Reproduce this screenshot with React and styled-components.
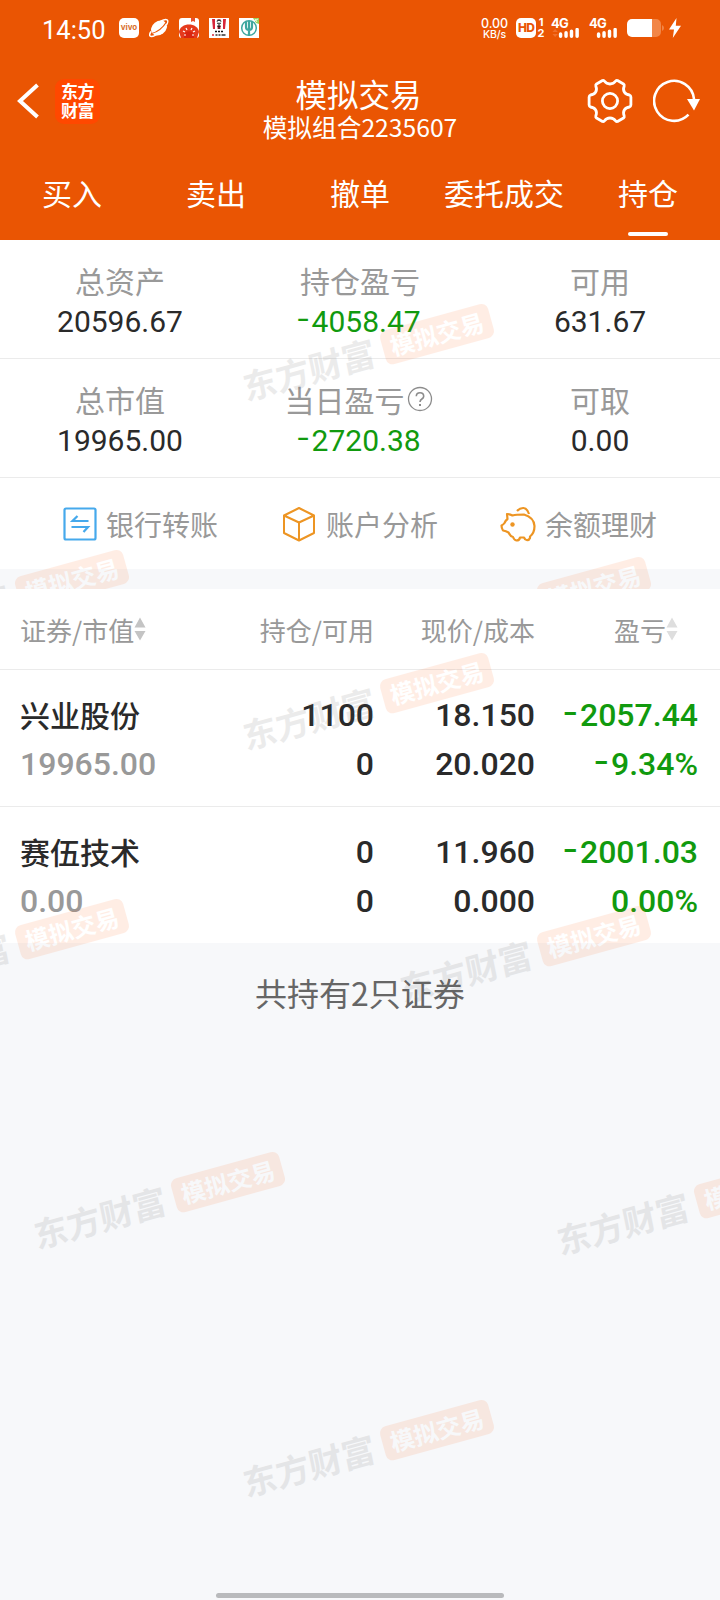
import React from "react";
import styled, { createGlobalStyle } from "styled-components";

const CJK = `"Noto Sans CJK SC", sans-serif`;

const stats = [
  [
    { label: "总资产", value: "20596.67" },
    { label: "持仓盈亏", value: "-4058.47", green: true },
    { label: "可用", value: "631.67" },
  ],
  [
    { label: "总市值", value: "19965.00" },
    { label: "当日盈亏", value: "-2720.38", green: true, help: true },
    { label: "可取", value: "0.00" },
  ],
];

const holdings = [
  {
    name: "兴业股份",
    market: "19965.00",
    amount: ["1100", "0"],
    price: ["18.150", "20.020"],
    profit: ["-2057.44", "-9.34%"],
  },
  {
    name: "赛伍技术",
    market: "0.00",
    amount: ["0", "0"],
    price: ["11.960", "0.000"],
    profit: ["-2001.03", "0.00%"],
  },
];

const summaryMarks = [
  [367, 113],
  [2, 359],
  [524, 366],
];

const holdingMarks = [
  [367, 113],
  [2, 359],
  [524, 366],
  [158, 612],
  [681, 618],
  [367, 860],
];

const App = () => (
  <>
    <GlobalStyle />
    <Screen>
      <Header>
        <StatusBar />
        <TitleBar />
        <Tabs>
          {["买入", "卖出", "撤单", "委托成交", "持仓"].map((tab) => (
            <Tab key={tab} $active={tab === "持仓"}>
              {tab}
            </Tab>
          ))}
        </Tabs>
      </Header>
      <Summary>
        {stats.map((row, i) => (
          <StatRow key={i}>
            {row.map((s) => (
              <Stat key={s.label}>
                <StatLabel $help={s.help}>
                  {s.label}
                  {s.help && <HelpIcon />}
                </StatLabel>
                <StatValue $green={s.green}>
                  <Signed value={s.value} />
                </StatValue>
              </Stat>
            ))}
          </StatRow>
        ))}
        <Actions>
          <Action>
            <TransferIcon />
            银行转账
          </Action>
          <Action>
            <CubeIcon />
            账户分析
          </Action>
          <Action>
            <PiggyIcon />
            余额理财
          </Action>
        </Actions>
        <Gap />
        <Watermarks marks={summaryMarks} />
      </Summary>
      <Holdings>
        <TableHead>
          <HeadCell $left>
            证券/市值
            <SortIcon color="#c4c4c4" />
          </HeadCell>
          <HeadCell>持仓/可用</HeadCell>
          <HeadCell>现价/成本</HeadCell>
          <HeadCell $sort>
            盈亏
            <SortIcon color="#dedede" />
          </HeadCell>
        </TableHead>
        {holdings.map((h) => (
          <Row key={h.name}>
            <Name>{h.name}</Name>
            <Num>{h.amount[0]}</Num>
            <Num>{h.price[0]}</Num>
            <Num $green>
              <Signed value={h.profit[0]} />
            </Num>
            <Num $muted>{h.market}</Num>
            <Num>{h.amount[1]}</Num>
            <Num>{h.price[1]}</Num>
            <Num $green>
              <Signed value={h.profit[1]} />
            </Num>
          </Row>
        ))}
        <Footer>共持有2只证券</Footer>
        <Watermarks marks={holdingMarks} />
        <HomeBar />
      </Holdings>
    </Screen>
  </>
);

// the minus sign is drawn a little wider and higher than the font's hyphen
const Signed = ({ value }) =>
  value.startsWith("-") ? (
    <>
      <Minus>-</Minus>
      {value.slice(1)}
    </>
  ) : (
    value
  );

const Watermarks = ({ marks }) =>
  marks.map(([x, y]) => (
    <Watermark key={`${x}-${y}`} style={{ left: x, top: y }}>
      <MarkName>东方财富</MarkName>
      <MarkBadge>模拟交易</MarkBadge>
    </Watermark>
  ));

const StatusBar = () => (
  <Status>
    <Clock>14:50</Clock>
    <AppIcons>
      <VivoIcon>vivo</VivoIcon>
      <svg width="20" height="20" viewBox="0 0 20 20">
        <ellipse cx="10" cy="10" rx="8.6" ry="6.8" transform="rotate(-38 10 10)" fill="#fff" />
        <path d="M2 13.500C-1.500 19 2 20 9 15.800M11.500 3.200C18 0 20.500 1.500 17.500 7" stroke="#fff" strokeWidth="1.5" fill="none" />
        <path d="M2.500 15.500Q11.500 13.500 17.800 3.500" stroke="#ea5503" strokeWidth="1.2" fill="none" />
      </svg>
      <svg width="20" height="20" viewBox="0 0 20 20">
        <rect width="20" height="20" rx="3" fill="#fff" />
        <path d="M12 0h4v4l-2-1-2 1z" fill="#e9502a" />
        <path d="M0 14C1 4 19 4 20 14l-2 6H2z" fill="#e53a1c" />
        <path d="M5 17C6 12 14 12 15 17v3H5z" fill="#d9250f" />
        <path d="M4 13l2 1M7 10l1 2M13 10l-1 2M16 13l-2 1M5 17h2M13 17h2" stroke="#fff" strokeWidth="1.2" />
      </svg>
      <svg width="20" height="20" viewBox="0 0 20 20">
        <rect width="20" height="20" fill="#fff" />
        <path d="M3 1h14l-1 10H4z" fill="#d7263a" />
        <path d="M6 1h2.5v10H6zM11.5 1H14v10h-2.5z" fill="#fff" />
        <circle cx="10" cy="4.6" r="3.2" fill="#fff" />
        <path d="M7.8 3.5Q10 .8 12.2 3.5M8 5.3h4M10 6v5M8.5 8l1.500 1 1.500-1" stroke="#222" strokeWidth="1.1" fill="none" />
        <path d="M6 13.5h2M9 13.5h2M12 13.5h2" stroke="#111" strokeWidth="1.6" />
        <path d="M6.5 17h2M9.5 17h2M12.5 17h4" stroke="#333" strokeWidth="1.3" />
        <path d="M3 17h2" stroke="#d7263a" strokeWidth="1.5" />
      </svg>
      <svg width="20" height="20" viewBox="0 0 20 20">
        <rect width="20" height="20" fill="#fff" />
        <circle cx="10" cy="10" r="7.3" fill="none" stroke="#3fa79f" strokeWidth="1.5" />
        <path d="M7 4v5q0 3 3 3t3-3V4M10 3v15" fill="none" stroke="#3fa79f" strokeWidth="2.2" />
        <path d="M14 0h6v6l-3-1z" fill="#9ad05c" />
        <path d="M15 3l4-2M16 1l2 3" stroke="#fff" strokeWidth=".8" />
      </svg>
    </AppIcons>
    <NetSpeed>
      <span>0.00</span>
      <small>KB/s</small>
    </NetSpeed>
    <HdBox>HD</HdBox>
    <SimNo>
      <span>1</span>
      <span>2</span>
    </SimNo>
    <Signal>
      <span>4G</span>
      <SignalBars arrows />
    </Signal>
    <Signal>
      <span>4G</span>
      <SignalBars />
    </Signal>
    <Battery width="37" height="18" viewBox="0 0 37 18">
      <path d="M25 0h4a5 5 0 0 1 5 5v8a5 5 0 0 1-5 5h-4zM35 6q2 1 2 3t-2 3z" fill="#f28647" />
      <path d="M5 0h20v18H5a5 5 0 0 1-5-5V5a5 5 0 0 1 5-5z" fill="#fff" />
    </Battery>
    <svg width="12" height="20" viewBox="0 0 12 20">
      <path d="M7.5 0L0 11.5h5L3.8 20 12 7.7H6.8z" fill="#fff" />
    </svg>
  </Status>
);

const SignalBars = ({ arrows }) => (
  <svg width="31" height="11" viewBox="0 0 31 11">
    {arrows && <path d="M0 4.5L3 1l3 3.500zM0 6.500h6L3 10z" fill="#f0702c" />}
    <path
      d="M9 6.700v2.300M15 5.200v3.800M21 3.600v5.400M27.200 1.700v7.300"
      stroke="#fff"
      strokeWidth="3.8"
      strokeLinecap="round"
    />
  </svg>
);

const TitleBar = () => (
  <TitleRow>
    <TitleSide>
      <svg width="22" height="36" viewBox="0 0 22 36">
        <path d="M20.5 2L3 18l17.500 16" fill="none" stroke="#fff" strokeWidth="4" />
      </svg>
      <Logo>
        东方
        <br />
        财富
      </Logo>
    </TitleSide>
    <TitleText>
      <h1>模拟交易</h1>
      <p>模拟组合2235607</p>
    </TitleText>
    <TitleSide $right>
      <svg width="46" height="46" viewBox="-23 -23 46 46" fill="none" stroke="#fff" strokeWidth="2.8">
        <path
          strokeLinejoin="round"
          d="M-7.500-20.500Q-6.500-20.800-5.700-20Q-3.500-17 0-17T5.700-20Q6.500-20.800 7.500-20.500L13.500-17Q14.500-16.300 14.200-15Q12.800-11.500 14.300-9T19.500-6Q20.800-5.500 20.900-4V4Q20.800 5.500 19.500 6Q15.800 6.500 14.300 9T14.200 15Q14.500 16.300 13.500 17L7.500 20.500Q6.500 20.800 5.700 20Q3.500 17 0 17T-5.700 20Q-6.500 20.800-7.500 20.500L-13.500 17Q-14.500 16.300-14.200 15Q-12.800 11.500-14.300 9T-19.500 6Q-20.800 5.500-20.900 4V-4Q-20.800-5.500-19.500-6Q-15.800-6.500-14.300-9T-14.200-15Q-14.500-16.300-13.500-17Z"
        />
        <circle r="7.6" />
      </svg>
      <svg width="48" height="46" viewBox="-21 -23 48 46">
        <path d="M20-2A20 20 0 1 0 14.500 13.700" fill="none" stroke="#fff" strokeWidth="2.6" />
        <path d="M13-2H26L20 9.500Z" fill="#fff" />
      </svg>
    </TitleSide>
  </TitleRow>
);

const HelpIcon = () => (
  <svg width="26" height="26" viewBox="0 0 26 26" fill="none" stroke="#8c8c8c">
    <circle cx="13" cy="13" r="11.5" strokeWidth="1.3" />
    <path d="M9.300 10.300Q9.300 6.700 13 6.700T16.700 10.200Q16.700 11.800 14.900 13T13 16" strokeWidth="1.6" />
    <path d="M13 18v2" strokeWidth="2" />
  </svg>
);

const TransferIcon = () => (
  <svg width="34" height="34" viewBox="0 0 34 34" fill="none" stroke="#46a9ec" strokeWidth="2.2">
    <rect x="1.500" y="1.500" width="31" height="31" rx="1.5" />
    <path d="M25.500 14H9.500L14.500 9M8.500 20H25L20.500 25" />
  </svg>
);

const CubeIcon = () => (
  <svg width="36" height="36" viewBox="-1 0 36 36" fill="none" stroke="#ed9523" strokeWidth="2" strokeLinejoin="round">
    <path d="M17 2L32 9.500V27L17 34.500L2 27V9.500ZM2 9.500L17 16.500L32 9.500M17 16.500V34.500" />
  </svg>
);

const PiggyIcon = () => (
  <svg width="36" height="36" viewBox="0 0 36 36" fill="none" stroke="#ed9523" strokeWidth="2.2" strokeLinejoin="round">
    <path d="M7 8Q10 8 12.500 9.500Q16 8.500 24 8.500Q34 11.500 34.500 20Q34.500 27 30 30.500V32Q29 34.500 26.500 34Q25 34 24 31.500H20Q19.500 34.500 16.500 34.500Q14 34 13 31Q10.500 30.500 8.500 26.500Q6 25 3 24.500Q1.500 22 1.500 19.500Q3.500 18.500 4.500 17Q5.500 14.500 7.500 13Z" />
    <path d="M17 5Q20 1.800 23.500 2T29 8" />
    <circle cx="12.500" cy="18.500" r="2.200" fill="#ed9523" stroke="none" />
  </svg>
);

const SortIcon = ({ color }) => (
  <svg width="12" height="24" viewBox="0 0 12 24">
    <path d="M6 .5L11.500 10.500H.5ZM.5 14H11.500L6 23.500Z" fill={color} />
  </svg>
);

const GlobalStyle = createGlobalStyle`
  * {
    box-sizing: border-box;
  }

  body {
    margin: 0;
    font-family: ${CJK};
  }
`;

const Screen = styled.div`
  display: flex;
  flex-direction: column;
  width: 720px;
  height: 1600px;
  overflow: hidden;
  background-color: #f7f8fa;
`;

const Header = styled.header`
  display: flex;
  flex-direction: column;
  height: 240px;
  color: #fff;
  background-color: #ea5503;
`;

const Status = styled.div`
  display: flex;
  align-items: center;
  height: 56px;
  padding: 0 39px 0 42px;
  font-family: Inter, sans-serif;
`;

const Clock = styled.span`
  width: 77px;
  padding-top: 3px;
  font-family: Roboto, sans-serif;
  font-size: 25.5px;
`;

const AppIcons = styled.div`
  display: flex;
  gap: 10px;
  margin-right: auto;
`;

const VivoIcon = styled.div`
  width: 20px;
  height: 20px;
  border-radius: 5px;
  font-size: 8px;
  font-weight: 700;
  line-height: 19px;
  text-align: center;
  color: #d9712f;
  background-color: #fff;
`;

const NetSpeed = styled.div`
  display: flex;
  flex-direction: column;
  align-items: center;
  margin-right: 8px;
  font-size: 12.5px;
  font-weight: 500;
  line-height: 12px;
  letter-spacing: -0.1px;

  small {
    font-size: 10.5px;
    line-height: 9px;
  }
`;

const HdBox = styled.div`
  width: 20px;
  height: 20px;
  border-radius: 5px;
  font-size: 12px;
  font-weight: 800;
  line-height: 20px;
  letter-spacing: -0.8px;
  text-align: center;
  color: #ea5503;
  background-color: #fff;
`;

const SimNo = styled.div`
  display: flex;
  flex-direction: column;
  width: 8px;
  margin: 0 6px 0 1px;
  font-size: 11px;
  font-weight: 700;
  line-height: 11px;
  text-align: center;
`;

const Signal = styled.div`
  display: flex;
  flex-direction: column;
  width: 31px;
  height: 20px;
  margin-right: 7px;
  font-size: 13px;
  font-weight: 700;
  line-height: 11px;
  letter-spacing: -0.8px;

  svg {
    margin-top: -1px;
  }
`;

const Battery = styled.svg`
  margin-right: 5px;
`;

const TitleRow = styled.div`
  display: grid;
  grid-template-columns: 180px 1fr 180px;
  align-items: center;
  height: 90px;
`;

const TitleSide = styled.div`
  display: flex;
  align-items: center;
  justify-content: ${(props) => (props.$right ? "flex-end" : "flex-start")};
  gap: ${(props) => (props.$right ? "20px" : "16px")};
  padding: ${(props) => (props.$right ? "0 19px 0 0" : "0 0 0 17px")};
`;

const Logo = styled.div`
  width: 45px;
  height: 45px;
  border-radius: 9px;
  font-size: 17px;
  font-weight: 700;
  line-height: 19px;
  letter-spacing: -0.5px;
  text-align: center;
  padding-top: 2px;
  background-color: #ff4800;
`;

const TitleText = styled.div`
  padding-top: 13px;
  text-align: center;

  h1 {
    margin: 0;
    padding-right: 3px;
    font-size: 31.5px;
    font-weight: 400;
    line-height: 38px;
  }

  p {
    margin: 0;
    font-size: 24.7px;
    line-height: 29px;
  }
`;

const Tabs = styled.nav`
  display: grid;
  grid-template-columns: repeat(5, 1fr);
  flex: 1;
`;

const Tab = styled.div`
  display: flex;
  flex-direction: column;
  align-items: center;
  padding-top: 26px;
  font-size: 30px;
  line-height: 40px;

  &::after {
    content: "";
    width: 40px;
    height: 4px;
    margin-top: 20px;
    border-radius: 2px;
    background-color: ${(props) => (props.$active ? "#fff" : "transparent")};
  }
`;

const Summary = styled.section`
  position: relative;
  height: 349px;
  overflow: hidden;
  background-color: #fff;
`;

const StatRow = styled.div`
  display: grid;
  grid-template-columns: repeat(3, 1fr);
  height: 119px;
  padding-top: 20px;
  border-bottom: 1px solid #ebebeb;
`;

const Stat = styled.div`
  text-align: center;
`;

const StatLabel = styled.div`
  display: flex;
  align-items: center;
  justify-content: center;
  gap: 2px;
  height: 40px;
  padding-right: ${(props) => (props.$help ? "3px" : 0)};
  font-size: 30px;
  line-height: 40px;
  color: #999;
`;

const StatValue = styled.div`
  padding-top: 2px;
  font-family: Roboto, sans-serif;
  font-size: 30px;
  line-height: 40px;
  color: ${(props) => (props.$green ? "#119a0e" : "#2a2a2a")};
`;

const Minus = styled.span`
  display: inline-block;
  margin-right: 4px;
  transform: translateY(-3px) scaleX(1.35);
`;

const Actions = styled.div`
  display: grid;
  grid-template-columns: repeat(3, 1fr);
  height: 91px;
  padding: 0 32px 0 31px;
`;

const Action = styled.div`
  display: flex;
  align-items: center;
  justify-content: center;
  gap: 9px;
  font-size: 28px;
  color: #999;
`;

const Gap = styled.div`
  height: 20px;
  background-color: #f7f8fa;
`;

const Holdings = styled.section`
  position: relative;
  display: flex;
  flex-direction: column;
  flex: 1;
  overflow: hidden;
`;

const TableHead = styled.div`
  display: grid;
  grid-template-columns: 180px 174px 161px 163px;
  height: 81px;
  padding: 0 22px 0 20px;
  align-items: center;
  border-bottom: 1px solid #ebebeb;
  background-color: #fff;
`;

const HeadCell = styled.div`
  display: flex;
  align-items: center;
  justify-content: ${(props) => (props.$left ? "flex-start" : "flex-end")};
  padding-right: ${(props) => (props.$sort ? "20px" : 0)};
  font-size: 26px;
  color: #999;
`;

const Row = styled.div`
  display: grid;
  grid-template-columns: 180px 174px 161px 163px;
  grid-template-rows: 49px 49px;
  height: 137px;
  padding: 20px 22px 0 20px;
  border-bottom: 1px solid #ebebeb;
  line-height: 49px;
  color: #2a2a2a;
  background-color: #fff;

  &:nth-of-type(3) {
    height: 136px;
    border-bottom: none;
  }
`;

const Name = styled.div`
  font-size: 30px;
  font-weight: 500;
  line-height: 48px;
`;

const numColor = ({ $green, $muted }) => {
  if ($green) return "#119a0e";
  return $muted ? "#999" : "#2a2a2a";
};

const Num = styled.div`
  padding-top: 1px;
  font-family: Roboto, sans-serif;
  font-size: 32px;
  font-weight: 500;
  text-align: ${(props) => (props.$muted ? "left" : "right")};
  color: ${numColor};
`;

const Footer = styled.div`
  padding-top: 27px;
  font-size: 32px;
  line-height: 44px;
  text-align: center;
  color: #666;
`;

const Watermark = styled.div`
  position: absolute;
  display: flex;
  align-items: center;
  gap: 9px;
  width: max-content;
  transform: translate(-50%, -50%) rotate(-15.5deg);
  opacity: 0.11;
  pointer-events: none;
`;

const MarkName = styled.div`
  font-size: 34px;
  font-weight: 700;
  line-height: 36px;
  color: #555;
  transform: skewX(-4deg);
`;

const MarkBadge = styled.div`
  width: 112px;
  height: 35px;
  border-radius: 7px;
  font-size: 24px;
  font-weight: 700;
  line-height: 34px;
  text-align: center;
  color: #fff;
  background-color: #ff6418;
`;

const HomeBar = styled.div`
  width: 288px;
  height: 5px;
  margin: auto auto 2px;
  border-radius: 3px;
  background-color: #b9babc;
`;

export default App;
